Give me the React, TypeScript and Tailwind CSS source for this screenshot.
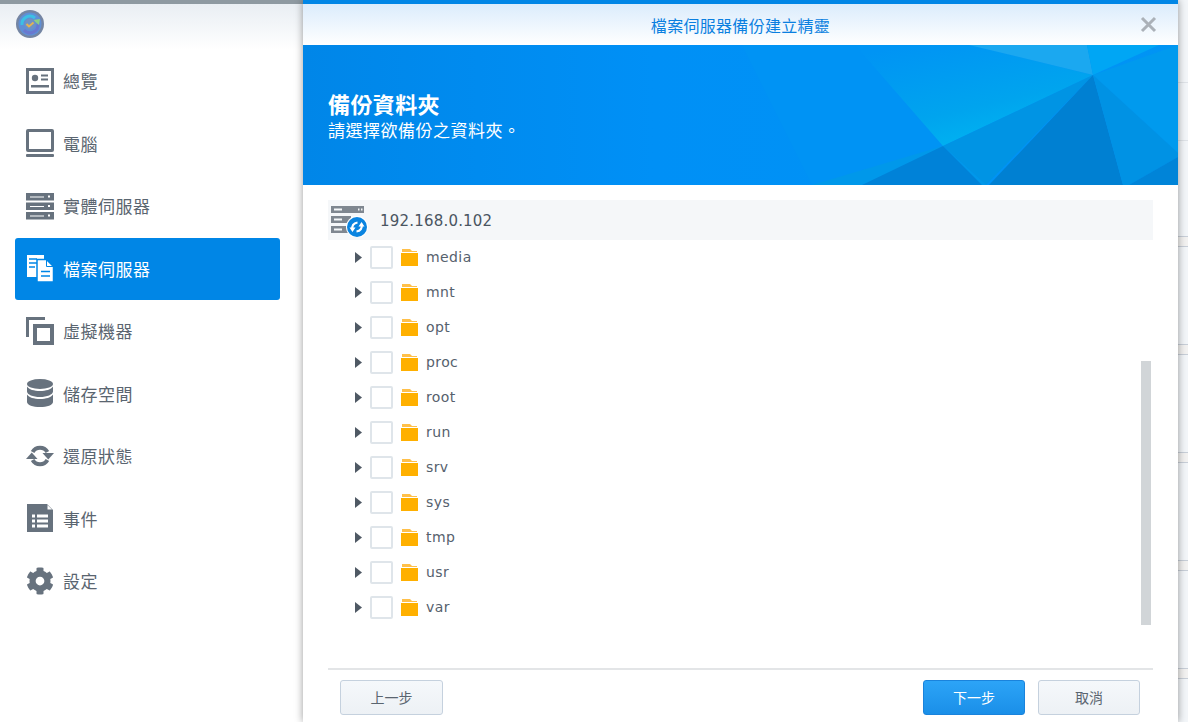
import { FaCog } from "react-icons/fa";
import React from "react";

const OverviewIcon = () => (
  <svg width="28" height="28" viewBox="0 0 28 28" fill="currentColor">
    <path fillRule="evenodd" d="M0 1h28v26H0zM3 4v20h22V4z" />
    <circle cx="9" cy="11" r="3.2" />
    <path d="M15 7.500h7v2h-7zM15 11.500h7v2h-7zM5 18h18v2.500H5z" />
  </svg>
);

const ComputerIcon = () => (
  <svg width="28" height="28" viewBox="0 0 28 28" fill="currentColor">
    <path fillRule="evenodd" d="M2 0h24a2 2 0 0 1 2 2v19a2 2 0 0 1-2 2H2a2 2 0 0 1-2-2V2a2 2 0 0 1 2-2zM3 3v17h22V3z" />
    <rect x="0" y="25" width="28" height="3" rx="1" />
  </svg>
);

const ServerIcon = () => (
  <svg width="28" height="28" viewBox="0 0 28 28" fill="currentColor">
    <path fillRule="evenodd" d="M0 1h28v7.500H0zM4 4.500v1h14v-1zM22 3.500v2h2v-2z" />
    <path fillRule="evenodd" d="M0 10.500h28V18H0zM4 14v1h14v-1zM22 13v2h2v-2z" />
    <path fillRule="evenodd" d="M0 20h28v7.500H0zM4 23.500v1h14v-1zM22 22.500v2h2v-2z" />
  </svg>
);

const FileServerIcon = () => (
  <svg width="28" height="28" viewBox="0 0 28 28">
    <path d="M1 1h17v22H1z" fill="#ffffff" />
    <path d="M3 5h8M3 9h8M3 13h6" stroke="#0086e6" strokeWidth="1.500" />
    <path d="M11 5.500h9.500l7 7V28H11z" fill="#ffffff" stroke="#0086e6" strokeWidth="1.500" />
    <path d="M20.500 6v6.500H27" fill="none" stroke="#0086e6" strokeWidth="1" />
    <path d="M15 17.500h9M15 22h9" stroke="#0086e6" strokeWidth="1.500" />
  </svg>
);

const VmIcon = () => (
  <svg width="28" height="28" viewBox="0 0 28 28" fill="currentColor">
    <path d="M0 0h19v3H3v17H0z" />
    <path fillRule="evenodd" d="M7 7h21v21H7zM11 11v13h13V11z" />
  </svg>
);

const StorageIcon = () => (
  <svg width="28" height="28" viewBox="0 0 28 28" fill="currentColor">
    <ellipse cx="14" cy="5" rx="13" ry="5" />
    <path d="M1 7.500c2 3 7 4.500 13 4.500s11-1.500 13-4.500v5c0 3-6 5.500-13 5.500S1 15.500 1 12.500z" />
    <path d="M1 15.500c2 3 7 4.500 13 4.500s11-1.500 13-4.500V23c0 3-6 5-13 5S1 26 1 23z" />
  </svg>
);

const RestoreIcon = () => (
  <svg width="28" height="28" viewBox="0 0 28 28" fill="none" stroke="currentColor">
    <path d="M6.600 10A8.500 8.500 0 0 1 21.400 10" strokeWidth="4" />
    <path d="M21.400 18A8.500 8.500 0 0 1 6.600 18" strokeWidth="4" />
    <path d="M16.500 11h11.500l-5.750 6.500z" fill="currentColor" stroke="none" />
    <path d="M0 17h11.500l-5.750-6.500z" fill="currentColor" stroke="none" />
  </svg>
);

const EventIcon = () => (
  <svg width="28" height="28" viewBox="0 0 28 28" fill="currentColor">
    <path fillRule="evenodd" d="M1 0h20l6 6v22H1zM6 10.500v3h3v-3zM11 10.500v3h11v-3zM6 15.500v3h3v-3zM11 15.500v3h11v-3zM6 20.500v3h3v-3zM11 20.500v3h11v-3z" />
    <path d="M21.500 1v4.500H26z" fill="#ffffff" />
  </svg>
);

const LogoIcon = () => (
  <svg width="28" height="28" viewBox="0 0 28 28" fill="none">
    <circle cx="14" cy="14" r="14" fill="#7485a3" />
    <circle cx="14" cy="14" r="11.500" fill="#5f8fd6" />
    <path d="M6 15a8 8 0 0 1 13-7" stroke="#3cc0e4" strokeWidth="3" />
    <path d="M22 14a8 8 0 0 1-14 6" stroke="#6a78cf" strokeWidth="3" />
    <path d="M17 10l7-1-1 6z" fill="#8bcf86" />
    <circle cx="14" cy="14" r="5.500" fill="#6f92c4" />
    <path d="M10.500 14l2.500 2.500 4.500-4" stroke="#e2b354" strokeWidth="2" />
  </svg>
);

const HostIcon = () => (
  <svg width="38" height="32" viewBox="0 0 38 32" fill="none">
    <path fillRule="evenodd" d="M1 1h33v7H1zM4 3.500v2h8v-2zM28 3.500v2h1.500v-2zM31 3.500v2h1.500v-2z" fill="#7f8790" />
    <path fillRule="evenodd" d="M1 11h20v7H1zM4 13.500v2h8v-2z" fill="#7f8790" />
    <path fillRule="evenodd" d="M1 21h18v7H1zM4 23.500v2h8v-2z" fill="#7f8790" />
    <circle cx="27" cy="22" r="11" fill="#ffffff" />
    <circle cx="27" cy="22" r="10" fill="#0a84e0" />
    <path d="M22.500 25c-1-4 1-7 5-7.500M31.500 19c1 4-1 7-5 7.500" stroke="#fff" strokeWidth="2.200" />
    <path d="M19.500 22.500h6L22.500 27zM28.500 21.500h6L31.500 17z" fill="#fff" />
  </svg>
);

const FolderIcon = () => (
  <svg width="17" height="17" viewBox="0 0 17 17">
    <path d="M1 0h8l2 2h5v1H1z" fill="#ffc04a" />
    <path d="M0 4h17v13H0z" fill="#ffb000" />
  </svg>
);

const BannerArt = () => (
  <svg className="absolute inset-0" width="875" height="140" viewBox="0 0 875 140">
    <defs>
      <linearGradient id="bannerBase" x1="0" y1="0" x2="1" y2="0">
        <stop offset="0" stopColor="#0086e8" />
        <stop offset="0.4" stopColor="#0090f6" />
        <stop offset="1" stopColor="#0094f4" />
      </linearGradient>
      <linearGradient id="cyanFacet" x1="0.2" y1="0" x2="0.75" y2="1">
        <stop offset="0" stopColor="#0094f4" />
        <stop offset="0.6" stopColor="#00a4ee" />
        <stop offset="1" stopColor="#00b8f2" />
      </linearGradient>
    </defs>
    <rect width="875" height="140" fill="url(#bannerBase)" />
    <path d="M439 0L509 140H640V101L552 0z" fill="#0093f4" />
    <path d="M552 0L666 0L790 30L640 101z" fill="url(#cyanFacet)" />
    <path d="M666 0H784L790 30z" fill="#1ba8f0" />
    <path d="M784 0H856L790 30z" fill="#00a6f4" />
    <path d="M790 30L875 0V108z" fill="#009aee" />
    <path d="M790 30L683 140L640 101z" fill="#0094e4" />
    <path d="M509 140L640 101L683 140z" fill="#0098ea" />
    <path d="M640 101L679 140H559z" fill="#0082d8" />
    <path d="M790 30L820 140H686z" fill="#0080d2" />
    <path d="M790 30L875 108V112L826 140H820z" fill="#0092e4" />
    <path d="M875 112V140H826z" fill="#0084d8" />
  </svg>
);

const navItems = [
  { label: "總覽", icon: <OverviewIcon /> },
  { label: "電腦", icon: <ComputerIcon /> },
  { label: "實體伺服器", icon: <ServerIcon /> },
  { label: "檔案伺服器", icon: <FileServerIcon />, active: true },
  { label: "虛擬機器", icon: <VmIcon /> },
  { label: "儲存空間", icon: <StorageIcon /> },
  { label: "還原狀態", icon: <RestoreIcon /> },
  { label: "事件", icon: <EventIcon /> },
  { label: "設定", icon: <FaCog size={28} /> },
];

const folders = ["media", "mnt", "opt", "proc", "root", "run", "srv", "sys", "tmp", "usr", "var"];

const App = () => {
  return (
    <div className="flex w-[1188px] h-[722px] overflow-hidden bg-white [font-family:'Noto_Sans_CJK_TC',sans-serif]">
      {/* Sidebar */}
      <aside className="w-[303px] shrink-0 flex flex-col bg-white">
        <div className="h-[4px] bg-[#8e99a1]"></div>
        <div className="h-[46px] pt-[6px] pl-[16px] bg-gradient-to-b from-[#e9eef3] to-white">
          <LogoIcon />
        </div>
        <nav className="px-[15px]">
          {navItems.map((item) => (
            <div
              key={item.label}
              className={`h-[62.5px] w-[265px] flex items-center gap-[9px] pl-[11px] pb-[1px] rounded-[3px] text-[17px] tracking-[0.5px] ${
                item.active ? "bg-[#0086e6] text-white" : "text-[#67727e]"
              }`}
            >
              <span className="w-[28px] flex justify-center">{item.icon}</span>
              <span className={item.active ? "text-white" : "text-[#5a6570]"}>{item.label}</span>
            </div>
          ))}
        </nav>
      </aside>

      {/* Wizard dialog */}
      <main className="relative z-10 w-[875px] shrink-0 flex flex-col bg-white shadow-[0_0_8px_rgba(0,0,0,0.4)]">
        <div className="h-[4px] bg-[#0086e6]"></div>
        <div className="relative h-[41px] flex items-center justify-center bg-gradient-to-b from-[#dbecfc] to-white text-[16px] tracking-[0.3px] text-[#0a7fe0]">
          檔案伺服器備份建立精靈
          <svg className="absolute right-[21px] top-[12px]" width="17" height="17" viewBox="0 0 17 17">
            <path d="M2 2l13 13M15 2L2 15" stroke="#abb1b8" strokeWidth="3" />
          </svg>
        </div>

        {/* Banner */}
        <div className="relative h-[140px] overflow-hidden">
          <BannerArt />
          <div className="absolute left-[25px] top-[45px] text-white">
            <div className="text-[22px] leading-[26px] tracking-[0.4px] font-bold">備份資料夾</div>
            <div className="text-[17px] leading-[24px] mt-[2px] tracking-[0.5px]">請選擇欲備份之資料夾。</div>
          </div>
        </div>

        {/* Tree */}
        <div className="relative flex-1 px-[25px] pt-[15px] [font-family:'DejaVu_Sans',sans-serif] text-[14px] tracking-[0.4px] text-[#56616d]">
          <div className="h-[40px] flex items-center bg-[#f5f7f9] pl-[2px] pt-[2px]">
            <span className="w-[38px] flex">
              <HostIcon />
            </span>
            <span className="ml-[12px] text-[15px] tracking-[0.2px] text-[#4a5561]">192.168.0.102</span>
          </div>
          {folders.map((name) => (
            <div key={name} className="h-[35px] flex items-center pl-[27px]">
              <svg width="7" height="11" viewBox="0 0 7 11">
                <path d="M0 0l7 5.500L0 11z" fill="#4f5964" />
              </svg>
              <span className="ml-[8px] w-[23px] h-[23px] border-2 border-[#dfe5ea] rounded-[2px] bg-white"></span>
              <span className="ml-[8px] flex">
                <FolderIcon />
              </span>
              <span className="ml-[8px]">{name}</span>
            </div>
          ))}
          <div className="absolute left-[838px] top-[176px] w-[10px] h-[264px] bg-[#d1d5d8]"></div>
        </div>

        {/* Footer */}
        <div className="mx-[25px] h-[2px] bg-[#e3e5e7]"></div>
        <div className="h-[52px] flex items-start pt-[10px] pl-[37px] pr-[38px] text-[14px]">
          <button className="w-[103px] h-[35px] rounded-[3px] border border-[#c5d1de] bg-gradient-to-b from-[#f5f8fb] to-[#edf1f5] text-[#5a6570]">
            上一步
          </button>
          <button className="ml-auto w-[102px] h-[35px] rounded-[3px] border border-[#1a83dc] bg-gradient-to-b from-[#2ca4f7] to-[#1a8fe8] text-white">
            下一步
          </button>
          <button className="ml-[13px] w-[102px] h-[35px] rounded-[3px] border border-[#c5d1de] bg-gradient-to-b from-[#f5f8fb] to-[#edf1f5] text-[#5a6570]">
            取消
          </button>
        </div>
      </main>

      {/* Page behind the dialog */}
      <div className="flex-1 flex flex-col bg-[#f3f6f9]">
        <div className="mt-[82px] h-[59px] border-y border-[#dfe3e8]"></div>
        {[0, 1, 2, 3, 4].map((i) => (
          <div key={i} className={`${i === 0 ? "mt-[95px]" : "mt-[97px]"} h-[11px] border-y border-[#c8cfd8] bg-[#f3f2f1]`}></div>
        ))}
      </div>
    </div>
  );
};

export default App;
